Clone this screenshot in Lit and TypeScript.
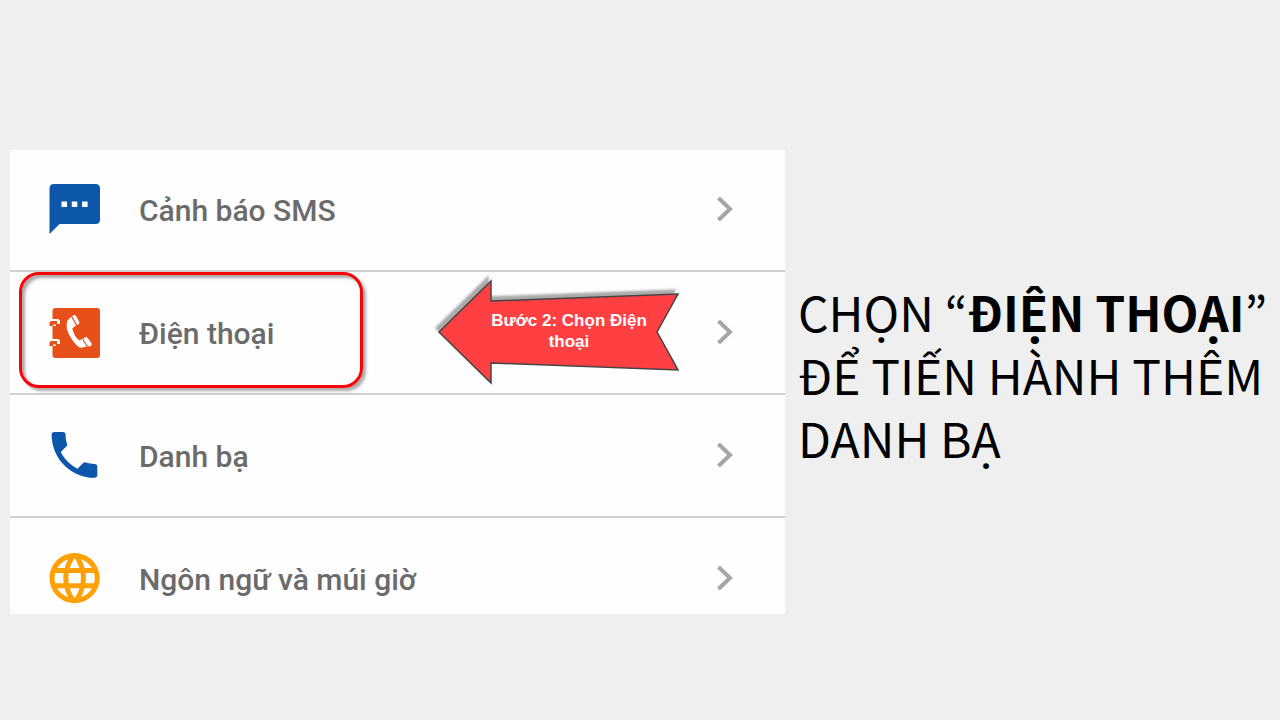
import { LitElement, html, css, svg } from "lit";
import { customElement } from "lit/decorators.js";

const smsIcon = svg`<svg class="icon" viewBox="0 0 52 52" aria-hidden="true">
  <path fill="#0d57ab" d="M5 1h41.500q4.500 0 4.500 4.500v31q0 4.500-4.500 4.500H10.500L.500 51V5.500Q.5 1 5 1z"/>
  <path fill="#fff" d="M12.500 18.500H18V24h-5.500zM22.800 18.500h5.500V24h-5.500zM33.100 18.500h5.500V24h-5.500z"/></svg>`;

const bookIcon = svg`<svg class="icon" viewBox="0 0 52 52" aria-hidden="true">
  <rect x="3.500" y="2" width="47.500" height="50" rx="3" fill="#e8501a"/>
  <path fill="#fff" d="M0 13h8.500q2.500 0 2.500 2.500V18H7v2H0zM0 33h8.500q2.500 0 2.500 2.500V38H7v2H0z"/>
  <path fill="#e8501a" d="M2.500 15H8v3.500H4V20H.500v-3q0-2 2-2zM2.500 35H8v3.500H4V40H.500v-3q0-2 2-2z"/>
  <path fill="#fff" d="M22.500 10.500L18.500 14.500Q15.500 22 22 32T32.500 41.800L39 40.200L34 32.500L30.500 34.500Q25 30.500 23.300 22.500L27.200 19.300z"/>
  <path fill="none" stroke="#fff" stroke-width="4.600" stroke-linecap="round" d="M25.300 11.500l2.800 5M36.800 33.500l3.600 4.600"/>
  <path fill="none" stroke="#e8501a" stroke-width="1.200" d="M22.800 11l4.800 8M33.800 33.500l4.500 7"/></svg>`;

const phoneIcon = svg`<svg class="icon" viewBox="0 0 52 52" aria-hidden="true">
  <path fill="#0d57ab" transform="translate(-5 -4.500) scale(2.540)" d="M6.620 10.790c1.440 2.830 3.760 5.140 6.590 6.590l2.200-2.200c.27-.27.67-.36 1.020-.24 1.120.37 2.330.57 3.570.57.550 0 1 .45 1 1V20c0 .55-.45 1-1 1-9.390 0-17-7.610-17-17 0-.55.45-1 1-1h3.500c.55 0 1 .45 1 1 0 1.250.2 2.450.57 3.570.11.35.03.74-.25 1.020l-2.200 2.200z"/></svg>`;

const globeIcon = svg`<svg class="icon" viewBox="0 0 52 52" aria-hidden="true">
  <path fill="#ffa105" transform="translate(-4.500 -4) scale(2.510)" d="M11.990 2C6.470 2 2 6.480 2 12s4.470 10 9.990 10C17.520 22 22 17.520 22 12S17.520 2 11.990 2zm6.930 6h-2.950c-.32-1.250-.78-2.450-1.380-3.560 1.840.63 3.370 1.910 4.330 3.560zM12 4.040c.83 1.200 1.480 2.530 1.910 3.960h-3.820c.43-1.430 1.080-2.760 1.910-3.960zM4.260 14C4.100 13.360 4 12.690 4 12s.1-1.360.26-2h3.380c-.08.66-.14 1.320-.14 2 0 .68.06 1.340.14 2H4.260zm.82 2h2.950c.32 1.250.78 2.450 1.380 3.560-1.840-.63-3.370-1.900-4.330-3.560zm2.950-8H5.080c.96-1.660 2.490-2.930 4.330-3.560C8.810 5.550 8.350 6.750 8.030 8zM12 19.960c-.83-1.200-1.480-2.530-1.910-3.960h3.820c-.43 1.430-1.080 2.760-1.910 3.960zM14.340 14H9.660c-.09-.66-.16-1.320-.16-2 0-.68.07-1.350.16-2h4.680c.09.65.16 1.320.16 2 0 .68-.07 1.340-.16 2zm.25 5.560c.6-1.110 1.060-2.310 1.380-3.560h2.950c-.96 1.650-2.490 2.930-4.330 3.560zM16.360 14c.08-.66.14-1.320.14-2 0-.68-.06-1.340-.14-2h3.380c.16.64.26 1.310.26 2s-.1 1.360-.26 2h-3.380z"/></svg>`;

const items = [
  { icon: smsIcon, label: "Cảnh báo SMS" },
  { icon: bookIcon, label: "Điện thoại", step: "Bước 2: Chọn Điện thoại" },
  { icon: phoneIcon, label: "Danh bạ" },
  { icon: globeIcon, label: "Ngôn ngữ và múi giờ" },
];

@customElement("app-root")
export class AppRoot extends LitElement {
  static styles = css`
    :host {
      display: block;
      min-height: 100vh;
      box-sizing: border-box;
      background: #efefef;
      padding: 150px 0 40px 10px;
    }
    .page {
      display: grid;
      grid-template-columns: minmax(0, 775fr) minmax(0, 482fr);
      gap: 13px;
      align-items: start;
    }
    .menu {
      list-style: none;
      margin: 0;
      padding: 0;
      background: #fefefe;
    }
    .item {
      position: relative;
      border-bottom: 2px solid #d0d0d0;
    }
    .item:last-child {
      border-bottom: 0;
    }
    .link {
      display: flex;
      align-items: center;
      gap: 38px;
      padding: 34px 49px 35px 39px;
      color: #6b6b6b;
      font: 500 30px/48px Roboto, sans-serif;
      text-decoration: none;
    }
    .item:first-child .link {
      padding-top: 33px;
    }
    .item:last-child .link {
      padding-bottom: 10px;
    }
    .icon {
      flex: none;
      width: 52px;
      height: 52px;
    }
    .label {
      flex: 1;
      padding-top: 4px;
    }
    .chevron {
      flex: none;
      width: 20px;
      height: 28px;
    }
    .outline {
      position: absolute;
      top: 0;
      left: 9px;
      width: 344px;
      height: 116px;
      box-sizing: border-box;
      border: 3px solid #fb0007;
      border-radius: 20px;
      box-shadow: 3px 3px 3px #aaa, inset 3px 3px 3px #aaa;
      pointer-events: none;
    }
    .arrow {
      position: absolute;
      top: 5px;
      right: 102px;
      width: 250px;
      height: 110px;
      display: grid;
      pointer-events: none;
    }
    .shape,
    .step {
      grid-area: 1 / 1;
    }
    .shape {
      width: 250px;
      height: 110px;
      filter: drop-shadow(-3px -4px 1px #aaa);
    }
    .step {
      z-index: 1;
      margin: 0;
      padding: 33px 32px 0 54px;
      color: #fff;
      font: 700 17px/21px "Liberation Sans", Arial, sans-serif;
      text-align: center;
    }
    .caption {
      margin: 0;
      padding-top: 130px;
      color: #000;
      font: 400 48px/63px "Noto Sans CJK JP", sans-serif;
      text-transform: uppercase;
    }
    .strong {
      font-weight: 700;
    }
  `;

  render() {
    return html`<main class="page">
      <ul class="menu">
        ${items.map(
          (item) => html`<li class="item">
            <a class="link" href="#">
              ${item.icon}
              <span class="label">${item.label}</span>
              <svg class="chevron" viewBox="0 0 20 28" aria-hidden="true">
                <path d="M2.500 3L14 14L2.500 25" fill="none" stroke="#a6a6a6" stroke-width="4" />
              </svg>
            </a>
            ${item.step
              ? html`<div class="outline"></div>
                  <div class="arrow">
                    <svg class="shape" viewBox="0 0 250 110" aria-hidden="true">
                      <path d="M6 55L58 4V24L245 17L224 55L245 93L58 86V106Z" fill="#ff4043" stroke="#444" stroke-width="1.500" />
                    </svg>
                    <p class="step">${item.step}</p>
                  </div>`
              : null}
          </li>`
        )}
      </ul>
      <h1 class="caption">Chọn “<b class="strong">Điện thoại</b>” để tiến hành thêm danh bạ</h1>
    </main>`;
  }
}
